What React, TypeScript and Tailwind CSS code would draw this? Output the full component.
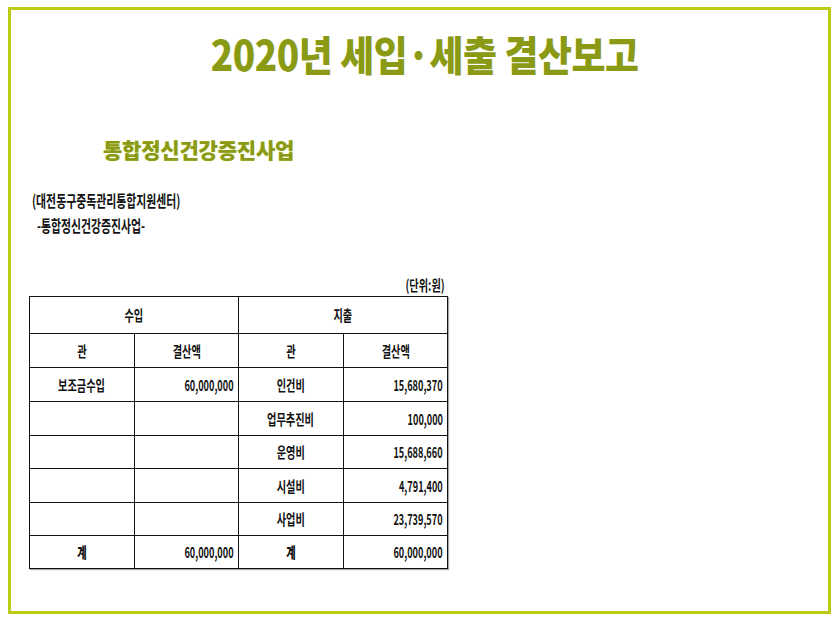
import React from "react";

const F = { fontFamily: '"Noto Sans CJK KR", "Noto Sans", sans-serif' };

function C({ children, align = "center", bold = false, num = false }: { children?: React.ReactNode; align?: "center" | "right" | "left"; bold?: boolean; num?: boolean }) {
  const origin = align === "right" ? "origin-right" : align === "left" ? "origin-left" : "origin-center";
  return (
    <span className={`inline-block whitespace-nowrap ${num ? "scale-x-[0.61]" : "scale-x-[0.68]"} ${origin} ${bold ? "font-black" : "font-bold"}`}>{children}</span>
  );
}

const rows: [string, string, string, string][] = [
  ["보조금수입", "60,000,000", "인건비", "15,680,370"],
  ["", "", "업무추진비", "100,000"],
  ["", "", "운영비", "15,688,660"],
  ["", "", "시설비", "4,791,400"],
  ["", "", "사업비", "23,739,570"],
];
const heights = ["h-[34px]", "h-[34px]", "h-[33px]", "h-[34px]", "h-[33px]"];

export default function App() {
  return (
    <div className="w-[838px] h-[621px] bg-white pl-[8px] pt-[7px]" style={F}>
      <div className="w-[823px] h-[607px] border-[3px] border-[#bccb14] flex flex-col">
        <div className="mt-[19px] h-[48px] flex justify-center pl-[10px]">
          <span className="inline-block whitespace-nowrap scale-x-[0.9] text-[41px] leading-[48px] font-black text-[#8a9a14] tracking-[-0.5px]">
            2020년 세입·세출 결산보고
          </span>
        </div>
        <div className="mt-[60px] pl-[92px] h-[24px]">
          <span className="inline-block origin-left text-[21px] leading-[24px] font-black text-[#8b9a16] tracking-[-0.2px] [text-shadow:0_0_1px_#d6df70]">
            통합정신건강증진사업
          </span>
        </div>
        <div className="mt-[30px] pl-[21px] text-[16px] leading-[18px] text-[#111]">
          <C align="left">(대전동구중독관리통합지원센터)</C>
        </div>
        <div className="mt-[7px] pl-[26px] text-[16px] leading-[18px] text-[#111]">
          <C align="left">-통합정신건강증진사업-</C>
        </div>
        <div className="mt-[42px] w-[434px] text-right text-[15px] leading-[18px] text-[#111]">
          <C align="right">(단위:원)</C>
        </div>
        <div className="ml-[18px] mt-[2px]">
          <table className="border-collapse text-[15px] leading-[18px] text-[#111] border border-[#111] shadow-[1px_1px_1px_#aaa]">
            <colgroup>
              <col className="w-[105px]" />
              <col className="w-[104px]" />
              <col className="w-[105px]" />
              <col className="w-[104px]" />
            </colgroup>
            <tbody>
              <tr className="h-[37px]">
                <td colSpan={2} className="border border-[#111] text-center"><C>수입</C></td>
                <td colSpan={2} className="border border-[#111] text-center"><C>지출</C></td>
              </tr>
              <tr className="h-[34px]">
                <td className="border border-[#111] text-center"><C>관</C></td>
                <td className="border border-[#111] text-center"><C>결산액</C></td>
                <td className="border border-[#111] text-center"><C>관</C></td>
                <td className="border border-[#111] text-center"><C>결산액</C></td>
              </tr>
              {rows.map((r, i) => (
                <tr key={i} className={heights[i]}>
                  <td className="border border-[#111] text-center"><C>{r[0]}</C></td>
                  <td className="border border-[#111] text-right pr-[4px]"><C align="right" num>{r[1]}</C></td>
                  <td className="border border-[#111] text-center"><C>{r[2]}</C></td>
                  <td className="border border-[#111] text-right pr-[4px]"><C align="right" num>{r[3]}</C></td>
                </tr>
              ))}
              <tr className="h-[33px]">
                <td className="border border-[#111] text-center"><C bold>계</C></td>
                <td className="border border-[#111] text-right pr-[4px]"><C align="right" num>60,000,000</C></td>
                <td className="border border-[#111] text-center"><C bold>계</C></td>
                <td className="border border-[#111] text-right pr-[4px]"><C align="right" num>60,000,000</C></td>
              </tr>
            </tbody>
          </table>
        </div>
      </div>
    </div>
  );
}
